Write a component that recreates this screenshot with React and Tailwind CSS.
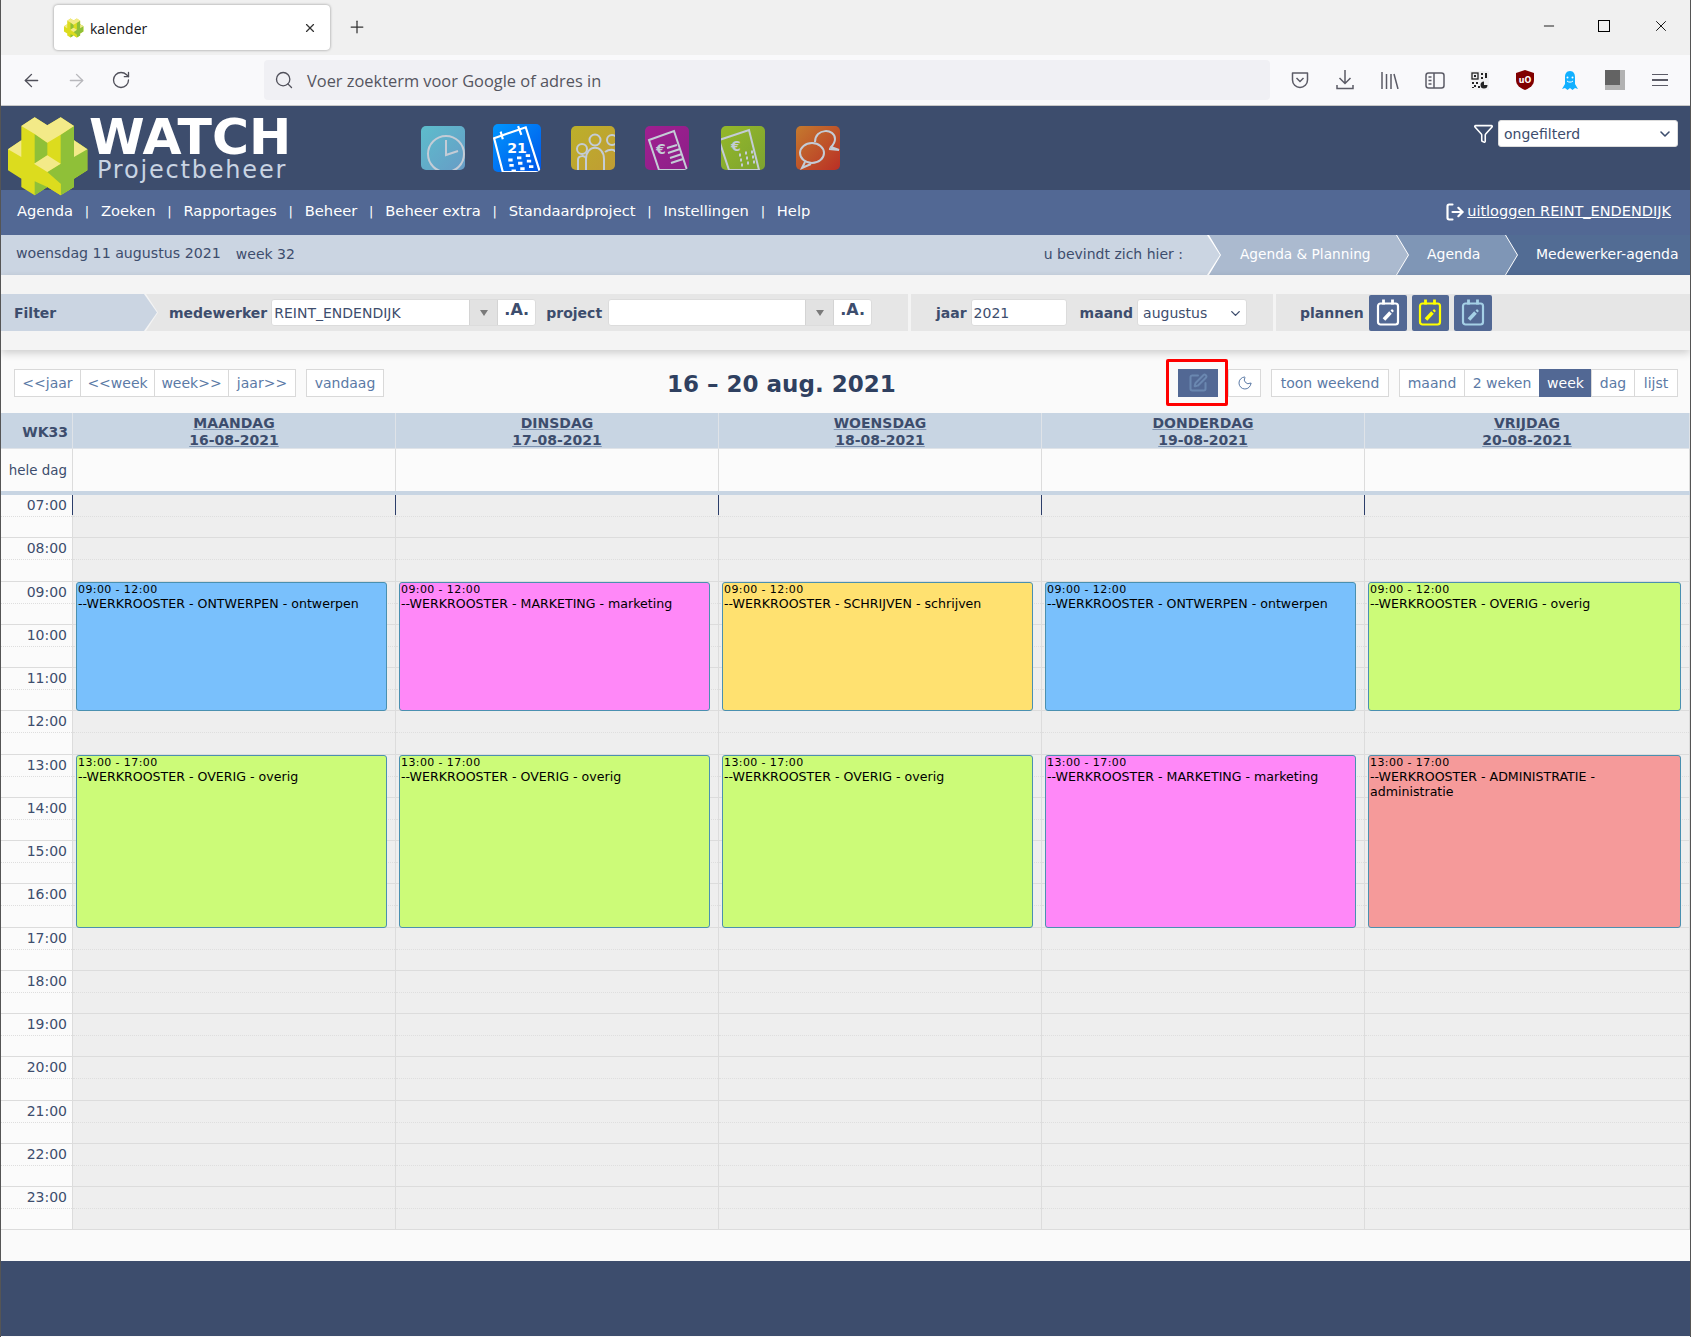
import { ArrowLeft, ArrowRight, ChevronDown, Funnel, LogOut, Minus, Moon, Plus, RotateCw, Search, SquarePen, X } from 'lucide-react';

const menu = ['Agenda', 'Zoeken', 'Rapportages', 'Beheer', 'Beheer extra', 'Standaardproject', 'Instellingen', 'Help'];
const hours = ['07:00', '08:00', '09:00', '10:00', '11:00', '12:00', '13:00', '14:00', '15:00', '16:00', '17:00', '18:00', '19:00', '20:00', '21:00', '22:00', '23:00'];

const blue = 'bg-[#79c0fc]';
const pink = 'bg-[#ff88f8]';
const yellow = 'bg-[#ffe170]';
const green = 'bg-[#ccfb78]';
const red = 'bg-[#f59a9a]';

const days = [
  { name: 'MAANDAG', date: '16-08-2021', am: ['--WERKROOSTER - ONTWERPEN - ontwerpen', blue], pm: ['--WERKROOSTER - OVERIG - overig', green] },
  { name: 'DINSDAG', date: '17-08-2021', am: ['--WERKROOSTER - MARKETING - marketing', pink], pm: ['--WERKROOSTER - OVERIG - overig', green] },
  { name: 'WOENSDAG', date: '18-08-2021', am: ['--WERKROOSTER - SCHRIJVEN - schrijven', yellow], pm: ['--WERKROOSTER - OVERIG - overig', green] },
  { name: 'DONDERDAG', date: '19-08-2021', am: ['--WERKROOSTER - ONTWERPEN - ontwerpen', blue], pm: ['--WERKROOSTER - MARKETING - marketing', pink] },
  { name: 'VRIJDAG', date: '20-08-2021', am: ['--WERKROOSTER - OVERIG - overig', green], pm: ['--WERKROOSTER - ADMINISTRATIE - administratie', red] },
];

function Logo({ className }) {
  return (
    <svg viewBox="0 0 270 264" className={className}>
      <polygon points="52,42 92,16 130,40 170,16 210,42 210,85 250,112 250,175 210,200 210,225 170,250 130,225 92,250 52,225 52,200 12,175 12,112 52,85" fill="#dcdc1e" />
      <polygon points="170,68 210,42 210,85 250,112 250,175 210,200 210,225 170,250 170,215 130,180 170,155" fill="#8fc038" />
      <polygon points="92,66 130,92 130,130 92,155" fill="#8fc038" />
      <polygon points="52,42 92,16 130,40 170,16 210,42 170,68 130,92 92,66" fill="#f3ea88" />
      <polygon points="12,112 52,85 52,135" fill="#f3ea88" />
      <polygon points="210,85 250,112 210,135" fill="#f3ea88" />
      <polygon points="90,155 130,130 170,155 130,180" fill="#f3ea88" />
      <polygon points="92,208 130,225 92,250" fill="#8fc038" />
      <polygon points="130,225 170,215 170,250" fill="#dcdc1e" />
    </svg>
  );
}

function AppIcon({ id, from, to, w = 44, children }) {
  return (
    <svg viewBox="0 0 44 44" style={{ width: w, height: w }} className="rounded-[5px] shrink-0">
      <defs>
        <linearGradient id={id} x1="0" y1="0" x2="1" y2="1">
          <stop offset="0" stopColor={from} />
          <stop offset="1" stopColor={to} />
        </linearGradient>
      </defs>
      <rect width="44" height="44" fill={`url(#${id})`} />
      <g fill="none" stroke="#c4ccd6" strokeWidth="2">{children}</g>
    </svg>
  );
}

function AppIcons() {
  return (
    <div className="flex items-center ml-[132px] mt-[18px] h-[48px]">
      <AppIcon id="a1" from="#5dbdcc" to="#679cc6">
        <circle cx="25" cy="28" r="18" />
        <path d="M25 14v15l12-4" />
      </AppIcon>
      <div className="ml-[28px]">
        <AppIcon id="a2" from="#0096ff" to="#0055e8" w={48}>
          <g stroke="#fff">
            <path d="M1 13L30 3l13 41H9z" />
            <path d="M7 7l2 7M23 2l3 8" />
            <path d="M14 33h4M22 31h4M30 29h4M15 38h4M23 36h4M31 34h4M17 43h4M25 41h4M33 39h4" strokeWidth="2.600" />
          </g>
          <text x="13" y="27" fill="#fff" stroke="none" fontSize="13" fontWeight="700" fontFamily="DejaVu Sans, sans-serif">21</text>
        </AppIcon>
      </div>
      <div className="ml-[30px]">
        <AppIcon id="a3" from="#bcb02a" to="#c09c34">
          <circle cx="11" cy="23" r="5" />
          <path d="M7 44V34c0-5 8-5 8-1v11" />
          <circle cx="24" cy="14" r="5.500" />
          <path d="M15 33c0-15 18-15 18 0v11" />
          <circle cx="41" cy="14" r="5" />
          <path d="M34 26c4-3 10-3 10 0" />
        </AppIcon>
      </div>
      <div className="ml-[30px]">
        <AppIcon id="a4" from="#a01f90" to="#8c1f88">
          <path d="M4 14l25-9 13 39H14z" />
          <path d="M22 22l10-3M23 27l12-4M25 32l12-4M26 37l12-4" />
          <text x="11" y="28" fill="#c4ccd6" stroke="none" fontSize="14" fontWeight="700" fontFamily="DejaVu Sans, sans-serif">€</text>
        </AppIcon>
      </div>
      <div className="ml-[32px]">
        <AppIcon id="a5" from="#94b82a" to="#7da330">
          <path d="M-2 14L28 4l10 40H8z" />
          <text x="10" y="25" fill="#c4ccd6" stroke="none" fontSize="14" fontWeight="700" fontFamily="DejaVu Sans, sans-serif">€</text>
          <path d="M18 29h2M24 27h2M30 26h2M19 34h2M25 32h2M31 31h2M20 39h2M26 37h2M32 36h2" strokeWidth="3" />
        </AppIcon>
      </div>
      <div className="ml-[31px]">
        <AppIcon id="a6" from="#c47a2e" to="#ba2f25">
          <ellipse cx="16" cy="27" rx="12" ry="10" />
          <path d="M9 36l-3 6 9-4" />
          <path d="M19 16c0-14 20-14 20-3 0 4-2 6-4 8l8 3-10-1" />
        </AppIcon>
      </div>
    </div>
  );
}

function CalBtn({ color, w = 'w-[38px]' }) {
  return (
    <div className={`${w} h-[36px] bg-[#526894] rounded-[2px] flex items-center justify-center`}>
      <svg viewBox="0 0 24 27" className="w-[24px] h-[27px]" fill="none" stroke={color} strokeWidth="2.200">
        <rect x="2" y="4.500" width="20" height="21" rx="2.500" />
        <path d="M7.500 0.500v5M16.500 0.500v5" strokeWidth="2.800" />
        <path d="M8 20.500l6.500-7" strokeWidth="3.600" />
        <path d="M15.500 12.500l1.500-1.500" strokeWidth="2.600" />
      </svg>
    </div>
  );
}

function Combo({ w, value }) {
  return (
    <div className="flex h-[27px] rounded-[3px] border border-[#dcdcdc] bg-white overflow-hidden">
      <div className={`${w} px-[2px] pt-[1px] text-[14px] leading-[25px] text-[#3d4d6d]`}>{value}</div>
      <div className="w-[29px] bg-[#e2e2e2] border-x border-[#d4d4d4] flex items-center justify-center">
        <div className="w-0 h-0 border-x-[4px] border-x-transparent border-t-[6px] border-t-[#7a7a7a]" />
      </div>
      <div className="w-[37px] text-center text-[16px] font-bold leading-[20px] text-[#3d4d6d]">.A.</div>
    </div>
  );
}

function Btn({ children, className = '' }) {
  return (
    <div className={`h-[28px] border border-[#d9d9d9] bg-white flex items-center justify-center text-[14px] text-[#5b7aa6] ${className}`}>
      {children}
    </div>
  );
}

function EventBox({ top, height, time, title, color }) {
  return (
    <div style={{ top, height }} className={`absolute left-[3px] right-[9px] ${color} border border-[#4a90b0] rounded-[3px] px-[1px] text-black`}>
      <div className="text-[11px] leading-[12px] tracking-[0.4px] mt-[1px]">{time}</div>
      <div className="text-[12.600px] leading-[15px]">{title}</div>
    </div>
  );
}

function DayColumn({ day, index }) {
  return (
    <div className="relative">
      {hours.map((h) => (
        <div key={h} className="h-[43.250px] bg-[#eeeeee] border-b border-r border-[#dcdcdc]">
          <div className="h-[22px] border-b border-dotted border-[#dedede]" />
        </div>
      ))}
      {index < 5 && <div className="absolute left-[-1px] top-0 w-px h-[20px] bg-[#2c3e6a]" />}
      <EventBox top={87} height={129} time="09:00 - 12:00" title={day.am[0]} color={day.am[1]} />
      <EventBox top={260} height={173} time="13:00 - 17:00" title={day.pm[0]} color={day.pm[1]} />
    </div>
  );
}

export default function App() {
  return (
    <div className="w-full h-[1337px] overflow-hidden bg-[#fafafa] border-x border-[#555] font-['DejaVu_Sans',sans-serif]">
      {/* browser tab strip */}
      <div className="h-[55px] bg-[#f0f0f0] flex pl-[53px] pt-[5px] font-['Open_Sans',sans-serif]">
        <div className="w-[276px] h-[45px] bg-white rounded-[4px] shadow-[0_0_3px_rgba(0,0,0,.4)] flex items-center pl-[9px] pr-[13px]">
          <Logo className="w-[22px] h-[22px]" />
          <span className="ml-[5px] mt-[2px] text-[14px] text-[#15141a]">kalender</span>
          <X size={14} className="ml-auto text-[#333]" />
        </div>
        <Plus size={20} strokeWidth={1.500} className="ml-[17px] mt-[12px] text-[#333]" />
        <div className="ml-auto flex items-start">
          <Minus size={16} strokeWidth={1.300} className="mt-[13px] mr-[41px] text-black" />
          <div className="mt-[15px] mr-[42px] w-[12px] h-[12px] border border-black" />
          <X size={18} strokeWidth={1.200} className="mt-[12px] mr-[20px] text-black" />
        </div>
      </div>

      {/* browser toolbar */}
      <div className="h-[51px] bg-[#f9f9fb] border-b border-[#c8c8c8] flex items-start font-['Open_Sans',sans-serif]">
        <ArrowLeft size={21} strokeWidth={1.600} className="ml-[20px] mt-[15px] text-[#50505a]" />
        <ArrowRight size={21} strokeWidth={1.600} className="ml-[24px] mt-[15px] text-[#b8b8bc]" />
        <RotateCw size={20} strokeWidth={1.600} className="ml-[24px] mt-[15px] text-[#50505a]" />
        <div className="ml-[133px] mt-[5px] w-[1006px] h-[40px] bg-[#f0f0f4] rounded-[4px] flex items-center pl-[10px]">
          <Search size={20} strokeWidth={1.600} className="text-[#50505a]" />
          <span className="ml-[13px] mt-[2px] text-[16.400px] text-[#55555f]">Voer zoekterm voor Google of adres in</span>
        </div>
        <div className="ml-[7px] flex mt-[15px]">
          <div className="w-[45px] h-[20px] flex items-center justify-center">
            <svg viewBox="0 0 18 17" className="w-[18px] h-[17px]" fill="none" stroke="#5b5b66" strokeWidth="1.500">
              <path d="M1.500 1h15v7a7.500 7.500 0 0 1-15 0z" strokeLinejoin="round" />
              <path d="M5.500 6l3.500 3.500L12.500 6" />
            </svg>
          </div>
          <div className="w-[45px] h-[20px] flex items-center justify-center">
            <svg viewBox="0 0 18 20" className="w-[18px] h-[20px]" fill="none" stroke="#5b5b66" strokeWidth="1.500">
              <path d="M9 0v13M3.500 8L9 13.500 14.500 8M1 15v3.500h16V15" />
            </svg>
          </div>
          <div className="w-[45px] h-[20px] flex items-center justify-center">
            <svg viewBox="0 0 18 17" className="w-[18px] h-[17px]" fill="none" stroke="#5b5b66" strokeWidth="1.500">
              <path d="M1 0v17M5.500 2v15M10 2v15M13 2l4 15" />
            </svg>
          </div>
          <div className="w-[45px] h-[20px] flex items-center justify-center">
            <svg viewBox="0 0 20 17" className="w-[20px] h-[17px]" fill="none" stroke="#5b5b66" strokeWidth="1.500">
              <rect x="1" y="1" width="18" height="15" rx="2.500" />
              <path d="M9 1v15M3.500 5h3M3.500 8.500h3M3.500 12h3" />
            </svg>
          </div>
          <div className="w-[45px] h-[20px] flex items-center justify-center">
            <svg viewBox="0 0 19 19" className="w-[19px] h-[19px]">
              <rect width="19" height="19" fill="#f0f0f0" />
              <rect x="2" y="2" width="6" height="6" fill="none" stroke="#222" strokeWidth="1.300" />
              <path d="M4 4h2v2H4zM11 2h2v2h-2zM15 2h2v5h-2zM11 6h2v2h-2zM2 11h2v2H2zM6 11h2v2H6zM4 14h2v2H4zM2 16h2v1H2zM8 15h2v2H8z" fill="#222" />
              <path d="M14 10.500a3.500 3.500 0 1 0 3.500 3.500H14z" fill="#222" />
            </svg>
          </div>
          <div className="w-[45px] h-[20px] flex items-center justify-center">
            <svg viewBox="0 0 18 20" className="w-[18px] h-[20px]">
              <path d="M9 0l9 3v7c0 5-4 8-9 10-5-2-9-5-9-10V3z" fill="#800000" />
              <text x="9" y="12.500" textAnchor="middle" fontSize="8" fontWeight="700" fill="#fff" fontFamily="DejaVu Sans, sans-serif">uO</text>
            </svg>
          </div>
          <div className="w-[45px] h-[20px] flex items-center justify-center">
            <svg viewBox="0 0 16 19" className="w-[16px] h-[19px]">
              <path d="M8 0c3.500 0 5 3 5 6v7l3 5-3-1-2.500 2L8 17l-2.500 2L3 17l-3 1 3-5V6c0-3 1.500-6 5-6z" fill="#12b0ff" />
              <circle cx="5.500" cy="6.500" r="1" fill="#fff" />
              <circle cx="10.500" cy="6.500" r="1" fill="#fff" />
              <path d="M5 10c1.500 1.500 4.500 1.500 6 0" stroke="#fff" fill="none" />
            </svg>
          </div>
          <div className="w-[45px] h-[20px] flex items-center justify-center">
            <div className="w-[20px] h-[20px] bg-[#b2b2b2]">
              <div className="w-[15px] h-[15px] bg-[#636363]" />
            </div>
          </div>
          <div className="w-[45px] h-[20px] flex flex-col items-center justify-center gap-[4px]">
            <div className="w-[16px] h-[1.500px] bg-[#5b5b66]" />
            <div className="w-[16px] h-[1.500px] bg-[#5b5b66]" />
            <div className="w-[16px] h-[1.500px] bg-[#5b5b66]" />
          </div>
        </div>
      </div>

      {/* site header */}
      <div className="h-[84px] bg-[#3d4d6d] flex items-start relative z-10">
        <Logo className="ml-[3px] mt-[6px] w-[90px] h-[88px] shrink-0" />
        <div className="-ml-[5px] mt-[12px] w-[200px]">
          <div className="text-[50.500px] font-bold leading-[38px] h-[38px] text-white">WATCH</div>
          <div className="text-[24px] leading-[26px] tracking-[1.800px] text-[#c9d4e3] ml-[8px] mt-[1px] whitespace-nowrap">Projectbeheer</div>
        </div>
        <AppIcons />
        <div className="ml-auto mt-[14px] mr-[12px] flex items-center gap-[4px]">
          <Funnel size={21} strokeWidth={1.800} className="text-white" />
          <div className="w-[180px] h-[27px] bg-white rounded-[3px] border border-[#ddd] flex items-center pl-[5px] pr-[4px] pt-[1px] text-[14px] text-[#3d4d6d]">
            ongefilterd
            <ChevronDown size={16} strokeWidth={2.400} className="ml-auto" />
          </div>
        </div>
      </div>

      {/* menu */}
      <div className="h-[45px] bg-[#526894] flex items-center pl-[16px] pr-[19px] pb-[2px] text-[14.700px] text-white">
        {menu.map((m, i) => (
          <div key={m} className="flex items-center">
            {i > 0 && <span className="mx-[11.800px] text-[13px]">|</span>}
            <span>{m}</span>
          </div>
        ))}
        <div className="ml-auto flex items-center text-[14.500px]">
          <LogOut size={20} strokeWidth={2.600} className="-scale-x-100 rotate-180" />
          <span className="underline ml-[2px]">uitloggen REINT_ENDENDIJK</span>
        </div>
      </div>

      {/* breadcrumb */}
      <div className="h-[40px] bg-white flex text-[14px]">
        <div className="flex-1 bg-[#cbd5e2] flex items-center pl-[15px] pr-[37px] pb-[2px] text-[#3d4d6d] [clip-path:polygon(0_0,calc(100%-13px)_0,100%_50%,calc(100%-13px)_100%,0_100%)]">
          <span className="text-[14.200px]">woensdag 11 augustus 2021</span>
          <span className="ml-[15px]">week 32</span>
          <span className="ml-auto">u bevindt zich hier :</span>
        </div>
        <div className="w-[199px] -ml-[11px] bg-[#abbacf] flex items-center pl-[31px] pb-[2px] text-[13.700px] text-white [clip-path:polygon(0_0,calc(100%-12px)_0,100%_50%,calc(100%-12px)_100%,0_100%,12px_50%)]">
          Agenda &amp; Planning
        </div>
        <div className="w-[120px] -ml-[11px] bg-[#7f96b6] flex items-center pl-[30px] pb-[2px] text-white [clip-path:polygon(0_0,calc(100%-12px)_0,100%_50%,calc(100%-12px)_100%,0_100%,12px_50%)]">
          Agenda
        </div>
        <div className="w-[184px] -ml-[11px] bg-[#526c94] flex items-center pl-[30px] pb-[2px] text-white [clip-path:polygon(0_0,100%_0,100%_100%,0_100%,12px_50%)]">
          Medewerker-agenda
        </div>
      </div>

      {/* filter */}
      <div className="h-[75px] bg-[#f4f4f4] pt-[19px] relative z-10 shadow-[0_3px_8px_rgba(0,0,0,.18)]">
        <div className="h-[37px] flex text-[14px] font-bold text-[#3d4d6d] bg-[#f4f4f4]">
          <div className="w-[156px] bg-[#cbd5e2] flex items-center pl-[13px] pt-[1px] [clip-path:polygon(0_0,calc(100%-13px)_0,100%_50%,calc(100%-13px)_100%,0_100%)]">Filter</div>
          <div className="w-[762px] -ml-[11px] bg-[#e6e6e6] flex items-center pl-[23px] [clip-path:polygon(0_0,100%_0,100%_100%,0_100%,12px_50%)]">
            <span className="pt-[1px]">medewerker</span>
            <div className="ml-[4px] font-normal"><Combo w="w-[197px]" value="REINT_ENDENDIJK" /></div>
            <span className="ml-[10px] pt-[1px]">project</span>
            <div className="ml-[6px] font-normal"><Combo w="w-[196px]" value="" /></div>
          </div>
          <div className="ml-[3px] w-[362px] bg-[#e6e6e6] flex items-center pl-[25px]">
            <span className="pt-[1px]">jaar</span>
            <div className="ml-[4px] w-[96px] h-[27px] rounded-[3px] border border-[#dcdcdc] bg-white px-[2px] pt-[1px] font-normal leading-[25px]">2021</div>
            <span className="ml-[13px] pt-[1px]">maand</span>
            <div className="ml-[4px] w-[110px] h-[27px] rounded-[3px] border border-[#dcdcdc] bg-white pl-[5px] pr-[3px] pt-[1px] font-normal flex items-center">
              augustus
              <ChevronDown size={15} strokeWidth={2.200} className="ml-auto" />
            </div>
          </div>
          <div className="ml-[3px] flex-1 bg-[#e6e6e6] flex items-center pl-[24px]">
            <span className="pt-[1px]">plannen</span>
            <div className="ml-[5px] flex gap-[5px]">
              <CalBtn color="#ffffff" />
              <CalBtn color="#ffff00" w="w-[37px]" />
              <CalBtn color="#a5d0e6" />
            </div>
          </div>
        </div>
      </div>

      {/* toolbar */}
      <div className="h-[63px] bg-[#fafafa] flex items-start pt-[19px] pl-[13px] pr-[12px]">
        <div className="flex">
          <Btn className="w-[67px]">&lt;&lt;jaar</Btn>
          <Btn className="w-[75px] -ml-px">&lt;&lt;week</Btn>
          <Btn className="w-[75px] -ml-px">week&gt;&gt;</Btn>
          <Btn className="w-[68px] -ml-px">jaar&gt;&gt;</Btn>
        </div>
        <Btn className="w-[78px] ml-[10px]">vandaag</Btn>
        <div className="ml-[283px] mt-[1px] text-[23px] font-bold leading-[28px] text-[#2f4060] whitespace-nowrap">16 – 20 aug. 2021</div>
        <div className="ml-auto flex relative">
          <div className="relative w-[40px] h-[28px] bg-[#526894] flex items-center justify-center mr-[11px]">
            <div className="absolute -left-[12px] -right-[10px] -top-[10px] -bottom-[9px] border-[3.500px] border-[#ff0000] rounded-[2px]" />
            <SquarePen size={20} strokeWidth={2.400} className="text-[#6a87b0]" />
          </div>
          <Btn className="w-[33px] -ml-px"><Moon size={16} strokeWidth={1.500} /></Btn>
          <Btn className="w-[118px] ml-[10px]">toon weekend</Btn>
          <Btn className="w-[66px] ml-[10px]">maand</Btn>
          <Btn className="w-[76px] -ml-px">2 weken</Btn>
          <Btn className="w-[53px] -ml-px !bg-[#526894] !border-[#526894] !text-white">week</Btn>
          <Btn className="w-[44px] -ml-px">dag</Btn>
          <Btn className="w-[44px] -ml-px">lijst</Btn>
        </div>
      </div>

      {/* calendar head */}
      <div className="grid grid-cols-[72px_repeat(4,323px)_1fr] h-[36px] bg-[#c8d5e3] border-b border-[#dfe3e8] text-[#3d4d6d] font-bold text-[14px] leading-[17px]">
        <div className="flex items-center justify-end pr-[4px] pt-[3px] border-r border-[#dfe3e8]">WK33</div>
        {days.map((d) => (
          <div key={d.name} className="text-center underline decoration-[#7d92b0] border-r border-[#dfe3e8] pt-[2px]">
            <div>{d.name}</div>
            <div>{d.date}</div>
          </div>
        ))}
      </div>

      {/* hele dag */}
      <div className="grid grid-cols-[72px_repeat(4,323px)_1fr] h-[42px] bg-[#fbfbfb] text-[14px] text-[#3d4d6d]">
        <div className="flex items-center justify-end pr-[5px] pt-[2px] border-r border-[#dcdcdc] whitespace-nowrap text-[13.400px]">hele dag</div>
        {days.map((d) => (
          <div key={d.name} className="border-r border-[#dcdcdc]" />
        ))}
      </div>
      <div className="h-[4px] bg-[#c8d5e3]" />

      {/* time grid */}
      <div className="grid grid-cols-[72px_repeat(4,323px)_1fr]">
        <div>
          {hours.map((h) => (
            <div key={h} className="h-[43.250px] bg-[#fbfbfb] border-b border-r border-[#dcdcdc] text-right pr-[5px] text-[14px] leading-[21px] text-[#3d4d6d]">
              <div className="h-[22px] border-b border-dotted border-[#dedede] -mr-[5px] pr-[5px]">{h}</div>
            </div>
          ))}
        </div>
        {days.map((d, i) => (
          <DayColumn key={d.name} day={d} index={i} />
        ))}
      </div>

      <div className="h-[31px] bg-[#fafafa]" />
      <div className="h-[75px] bg-[#3d4d6d]" />
    </div>
  );
}
